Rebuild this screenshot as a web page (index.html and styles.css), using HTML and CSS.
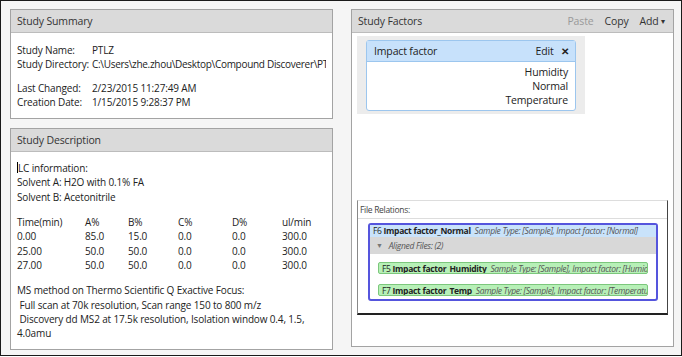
FILE: index.html
```html
<!DOCTYPE html>
<html lang="en">
<head>
  <meta charset="UTF-8" />
  <title>Study Summary</title>
  <link rel="stylesheet" href="styles.css">
</head>
<body>
<div class="frame">
  <div class="col">
    <div class="panel summary">
      <div class="panel-head">Study Summary</div>
      <div class="panel-body">
        <div class="kv"><span class="k">Study Name:</span><span>PTLZ</span></div>
        <div class="kv"><span class="k">Study Directory:</span><span class="path">C:\Users\zhe.zhou\Desktop\Compound Discoverer\PTLZ</span></div>
        <div class="kv gap"><span class="k">Last Changed:</span><span>2/23/2015 11:27:49 AM</span></div>
        <div class="kv"><span class="k">Creation Date:</span><span>1/15/2015 9:28:37 PM</span></div>
      </div>
    </div>

    <div class="panel desc">
      <div class="panel-head">Study Description</div>
      <div class="panel-body">
        <div><span class="caret"></span>LC information:</div>
        <div>Solvent A: H2O with 0.1% FA</div>
        <div>Solvent B: Acetonitrile</div>
        <div class="grad">
          <span>Time(min)</span><span>A%</span><span>B%</span><span>C%</span><span>D%</span><span>ul/min</span>
          <span>0.00</span><span>85.0</span><span>15.0</span><span>0.0</span><span>0.0</span><span>300.0</span>
          <span>25.00</span><span>50.0</span><span>50.0</span><span>0.0</span><span>0.0</span><span>300.0</span>
          <span>27.00</span><span>50.0</span><span>50.0</span><span>0.0</span><span>0.0</span><span>300.0</span>
        </div>
        <div>MS method on Thermo Scientific Q Exactive Focus:</div>
        <div>&nbsp;Full scan at 70k resolution, Scan range 150 to 800 m/z</div>
        <div class="wrap">&nbsp;Discovery dd MS2 at 17.5k resolution, Isolation window 0.4, 1.5, 4.0amu</div>
      </div>
    </div>
  </div>

  <div class="col">
    <div class="panel factors">
      <div class="panel-head">
        <span>Study Factors</span>
        <span class="actions">
          <span class="dim">Paste</span>
          <span>Copy</span>
          <span>Add <span class="tri">&#9662;</span></span>
        </span>
      </div>
      <div class="panel-body">
        <div class="factor-wrap">
          <div class="factor">
            <div class="factor-head">
              <span>Impact factor</span>
              <span>Edit <b class="x">&#10005;</b></span>
            </div>
            <div class="factor-vals">
              <div>Humidity</div>
              <div>Normal</div>
              <div>Temperature</div>
            </div>
          </div>
        </div>

        <div class="relations">
          <div class="rel-head">File Relations:</div>
          <div class="rel-group">
            <div class="rel-main">F6 <b>Impact factor_Normal</b>&nbsp; <i>Sample Type: [Sample], Impact factor: [Normal]</i></div>
            <div class="rel-aligned"><span class="tri2">&#9660;</span> <i>Aligned Files: (2)</i></div>
            <div class="rel-list">
              <div class="rel-file">F5 <b>Impact factor_Humidity</b>&nbsp; <i>Sample Type: [Sample], Impact factor: [Humidity]</i></div>
              <div class="rel-file">F7 <b>Impact factor_Temp</b>&nbsp; <i>Sample Type: [Sample], Impact factor: [Temperature]</i></div>
            </div>
          </div>
        </div>
      </div>
    </div>
  </div>
</div>
</body>
</html>
```

FILE: styles.css
```css
body { margin: 0; background: #fff; font-family: "Open Sans", "Noto Sans", sans-serif; font-size: 10px; letter-spacing: -0.15px; color: #222; }
.frame { box-sizing: border-box; width: 682px; height: 356px; border: 1px solid #1a1a1a; background: #f5f5f5; padding: 8px 8px 8px 9px; display: flex; gap: 18px; }
.col { width: 323px; display: flex; flex-direction: column; gap: 9px; }
.panel { background: #fff; border: 1px solid #a3a3a3; display: flex; flex-direction: column; }
.panel-head { height: 22px; background: #dadada; border-bottom: 1px solid #bcbcbc; display: flex; align-items: center; justify-content: space-between; padding: 0 6px; font-size: 10.5px; color: #333; }
.panel-body { padding: 9px 6px; line-height: 14.3px; }
.summary { height: 114px; }
.summary .panel-body { padding-top: 10px; }
.kv { display: flex; white-space: nowrap; overflow: hidden; }
.kv .k { width: 75px; flex: none; }
.kv .path { letter-spacing: -0.3px; }
.kv.gap { margin-top: 9px; }
.desc { flex: 1; }
.desc .panel-body { padding-top: 9px; }
.caret { display: inline-block; width: 1px; height: 11px; background: #000; vertical-align: -1px; }
.grad { display: grid; grid-template-columns: 68px 43px 50px 54px 50px auto; margin: 11px 0; }
.wrap { width: 292px; }
.factors { flex: 1; }
.factors .panel-body { padding: 3px 5px 0 5px; }
.actions { display: flex; gap: 11px; margin-right: 2px; }
.dim { color: #999; }
.tri { font-size: 8px; vertical-align: 1px; }
.factor-wrap { width: 228px; background: #ececec; padding: 4px 9px 3px 9px; box-sizing: border-box; }
.factor { background: #fff; border: 1px solid #9cc6ee; border-radius: 3px; }
.factor-head { height: 20px; background: #c7e1fb; border-bottom: 1px solid #9cc6ee; display: flex; justify-content: space-between; align-items: center; padding: 0 6px 0 7px; font-size: 10.5px; }
.x { font-size: 10px; margin-left: 5px; }
.factor-vals { text-align: right; padding: 3px 7px 3px 0; line-height: 14px; font-size: 10.5px; }
.relations { margin-top: 86px; height: 115px; box-sizing: border-box; border: 1px solid #ddd; border-bottom: 2px solid #222; border-right: 1px solid #444; border-left: 1px solid #888; font-size: 8.5px; letter-spacing: -0.3px; line-height: 12px; }
.rel-head { height: 17px; padding-left: 2px; display: flex; align-items: center; border-bottom: 1px solid #ddd; color: #444; }
.rel-group { margin: 4px 9px 0 10px; border: 2px solid #5555dd; border-radius: 3px; height: 78px; box-sizing: border-box; overflow: hidden; }
.rel-main { background: #c9e3fb; padding: 0 3px; height: 12px; white-space: nowrap; overflow: hidden; }
.rel-aligned { background: #d8d8d8; height: 17px; display: flex; align-items: center; padding-left: 6px; gap: 6px; color: #333; }
.tri2 { font-size: 7px; color: #777; }
.rel-list { padding: 8px 8px 0 8px; display: flex; flex-direction: column; gap: 10px; }
.rel-file { background: #b7f0b7; border: 1px solid #7cc77c; border-radius: 2px; height: 12px; line-height: 11px; padding: 0 3px; white-space: nowrap; overflow: hidden; box-sizing: border-box; }
i { color: #555; }
```
